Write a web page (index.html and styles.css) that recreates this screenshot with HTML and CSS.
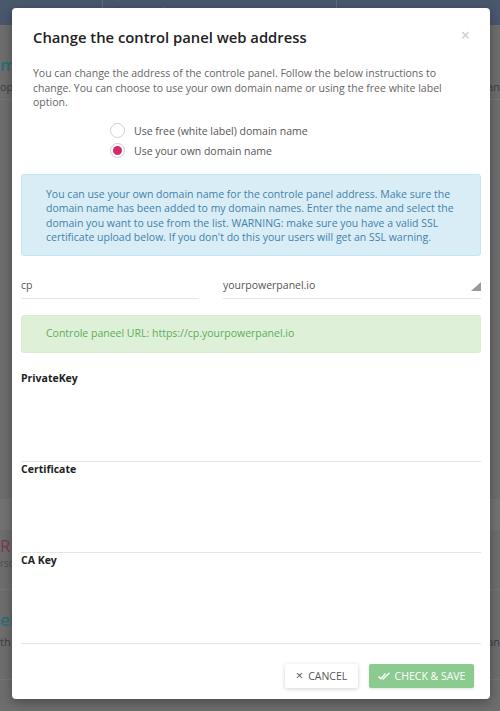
FILE: index.html
```html
<!DOCTYPE html>
<html lang="en">
<head>
<meta charset="utf-8">
<title>Change the control panel web address</title>
<link rel="stylesheet" href="styles.css">
</head>
<body>
<div class="page">
  <header class="topbar">
    <div class="topbar-left"></div>
    <div class="search">
      <svg class="search-icon" width="12" height="12" viewBox="0 0 12 12"><circle cx="5" cy="5" r="3.6" fill="none" stroke="#26303d" stroke-width="1.4"/><path d="M7.6 7.6 L11 11" stroke="#26303d" stroke-width="1.6"/></svg>
      <span>Search</span>
    </div>
    <div class="topbar-right"></div>
  </header>
  <section class="bg-section">
    <div class="bg-heading teal">m</div>
    <div class="bg-row"><span>op</span><span>an</span></div>
  </section>
  <section class="bg-section tall"></section>
  <div class="bg-band"></div>
  <section class="bg-section s2">
    <div class="bg-heading red">RL</div>
    <div class="bg-small">rsc</div>
  </section>
  <section class="bg-section s3">
    <div class="bg-heading teal">eb</div>
    <div class="bg-row"><span>th</span><span>an</span></div>
  </section>
</div>

<div class="modal">
  <div class="modal-header">
    <h2 class="modal-title">Change the control panel web address</h2>
    <span class="close">&times;</span>
  </div>
  <p class="intro">You can change the address of the controle panel. Follow the below instructions to change. You can choose to use your own domain name or using the free white label option.</p>

  <div class="radios">
    <label class="radio"><span class="dot"></span>Use free (white label) domain name</label>
    <label class="radio"><span class="dot checked"></span>Use your own domain name</label>
  </div>

  <div class="alert info">You can use your own domain name for the controle panel address. Make sure the domain name has been added to my domain names. Enter the name and select the domain you want to use from the list. WARNING: make sure you have a valid SSL certificate upload below. If you don't do this your users will get an SSL warning.</div>

  <div class="inputs">
    <div class="input">cp</div>
    <div class="input select"><span>yourpowerpanel.io</span>
      <svg width="10" height="9" viewBox="0 0 10 9"><path d="M10 0 L10 9 L0 9 Z" fill="#9a9a9a"/></svg>
    </div>
  </div>

  <div class="alert success">Controle paneel URL: https://cp.yourpowerpanel.io</div>

  <div class="fields">
    <div class="field">
      <div class="field-label">PrivateKey</div>
      <div class="textarea"></div>
    </div>
    <div class="field">
      <div class="field-label">Certificate</div>
      <div class="textarea"></div>
    </div>
    <div class="field">
      <div class="field-label">CA Key</div>
      <div class="textarea"></div>
    </div>
  </div>

  <div class="footer">
    <button class="btn cancel"><span class="x">&times;</span>CANCEL</button>
    <button class="btn save"><svg width="12" height="8" viewBox="0 0 12 8"><path d="M0.5 4.5 L2.8 6.8 L7.5 1.5" fill="none" stroke="#fff" stroke-width="1.3"/><path d="M4.6 6.6 L5 7 L11.5 0.8" fill="none" stroke="#fff" stroke-width="1.3"/></svg>CHECK &amp; SAVE</button>
  </div>
</div>
</body>
</html>
```

FILE: styles.css
```css
* { box-sizing: border-box; }
html, body { margin: 0; padding: 0; }
body {
  width: 500px;
  height: 711px;
  overflow: hidden;
  background: #6e6e6e;
  font-family: "Open Sans", "Noto Sans", sans-serif;
}
.page { width: 500px; height: 711px; overflow: hidden; }
.topbar {
  height: 25px;
  background: #4a586e;
  display: flex;
}
.topbar-left { width: 102px; }
.search {
  width: 235px;
  border-left: 1px solid #5d6a80;
  border-right: 1px solid #5d6a80;
  display: flex;
  align-items: center;
  gap: 6px;
  padding-left: 10px;
  color: #6f7c90;
  font-size: 12px;
}
.topbar-right { flex: 1; }
.bg-section {
  height: 75px;
  padding-top: 30px;
  border-bottom: 1px solid #767676;
}
.bg-section.tall { height: 400px; }
.bg-band { height: 30px; background: #737373; }
.bg-section.s2 { height: 60px; padding-top: 6px; }
.bg-section.s3 { height: 90px; padding-top: 20px; }
.bg-heading {
  font-size: 17px;
  font-weight: 600;
  line-height: 20px;
  white-space: nowrap;
}
.teal { color: #2a6f7a; }
.red { color: #7a3b4e; font-weight: 400; }
.bg-small { font-size: 10px; color: #4e4e4e; }
.bg-row {
  display: flex;
  justify-content: space-between;
  font-size: 11px;
  color: #3e3e3e;
  margin-top: 4px;
}

/* modal */
.modal {
  position: absolute;
  left: 12px;
  top: 8px;
  width: 478px;
  height: 691px;
  background: #fff;
  border-radius: 4px;
  box-shadow: 0 3px 12px rgba(0,0,0,0.35);
  padding: 0 9px;
}
.modal-header {
  display: flex;
  justify-content: space-between;
  align-items: flex-start;
  padding: 19px 11px 0 12px;
}
.modal-title {
  margin: 0;
  font-size: 14.8px;
  line-height: 20px;
  font-weight: 600;
  color: #222;
}
.close {
  color: #c8c8c8;
  font-size: 16px;
  line-height: 16px;
}
.intro {
  margin: 19px 0 0;
  padding: 0 12px;
  font-size: 10.5px;
  line-height: 14.5px;
  color: #666;
}
.radios {
  margin-top: 11px;
  padding-left: 89px;
  display: flex;
  flex-direction: column;
}
.radio {
  display: flex;
  align-items: center;
  height: 20px;
  gap: 9px;
  font-size: 10.5px;
  color: #555;
}
.dot {
  width: 15px;
  height: 15px;
  border-radius: 50%;
  border: 1px solid #cfcfcf;
  display: flex;
  align-items: center;
  justify-content: center;
}
.dot.checked::after {
  content: "";
  width: 9px;
  height: 9px;
  border-radius: 50%;
  background: #d42a6c;
}
.alert {
  border-radius: 3px;
  font-size: 10.5px;
  line-height: 14.5px;
  padding-left: 24px;
  padding-right: 20px;
}
.alert.info {
  margin-top: 13px;
  background: #d9edf7;
  border: 1px solid #c4e6f2;
  color: #4282a8;
  padding-top: 12px;
  padding-bottom: 10px;
}
.inputs {
  margin-top: 16px;
  display: grid;
  grid-template-columns: 178px 1fr;
  gap: 24px;
}
.input {
  height: 27px;
  border-bottom: 1px solid #e6e6e6;
  font-size: 10.5px;
  color: #555;
  display: flex;
  align-items: center;
}
.input.select {
  justify-content: space-between;
}
.input.select svg { margin-top: 4px; }
.alert.success {
  margin-top: 16px;
  height: 38px;
  display: flex;
  align-items: center;
  background: #dff0d8;
  border: 1px solid #d8ecd0;
  color: #5cad5c;
}
.fields { margin-top: 18px; }
.field-label {
  font-size: 10.5px;
  line-height: 14px;
  font-weight: 700;
  color: #222;
}
.textarea {
  height: 77px;
  border-bottom: 1px solid #e6e6e6;
}
.footer {
  margin-top: 20px;
  display: flex;
  justify-content: flex-end;
  gap: 11px;
  padding-right: 7px;
}
.btn {
  height: 24px;
  border: none;
  border-radius: 2px;
  font-family: "Open Sans", "Noto Sans", sans-serif;
  font-size: 10.5px;
  display: flex;
  align-items: center;
  justify-content: center;
  gap: 5px;
  padding: 0;
}
.btn.cancel {
  width: 73px;
  background: #fff;
  color: #555;
  box-shadow: 0 1px 4px rgba(0,0,0,0.18);
}
.btn.cancel .x { font-size: 13px; line-height: 11px; color: #555; }
.btn.save {
  width: 105px;
  background: #8ccb8f;
  color: #fff;
  box-shadow: 0 1px 3px rgba(0,0,0,0.12);
}
```
